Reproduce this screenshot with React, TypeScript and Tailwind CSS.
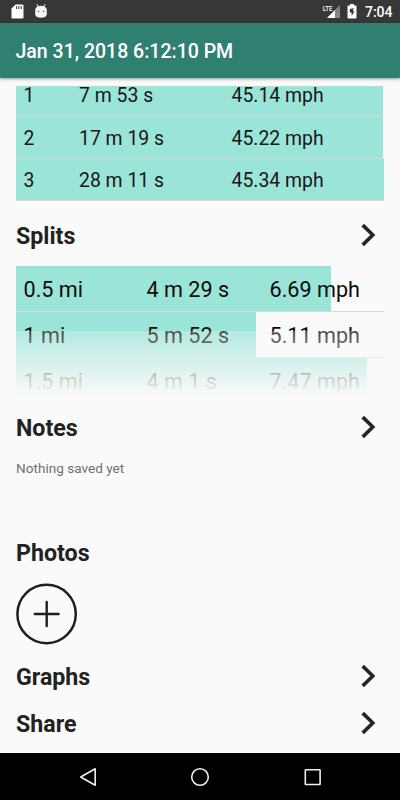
import React from "react";

const laps = [
  { lap: "1", time: "7 m 53 s", speed: "45.14 mph", width: 367 },
  { lap: "2", time: "17 m 19 s", speed: "45.22 mph", width: 367 },
  { lap: "3", time: "28 m 11 s", speed: "45.34 mph", width: 368 },
];

const splits = [
  { distance: "0.5 mi", time: "4 m 29 s", speed: "6.69 mph", width: 315 },
  { distance: "1 mi", time: "5 m 52 s", speed: "5.11 mph", width: 240 },
  { distance: "1.5 mi", time: "4 m 1 s", speed: "7.47 mph", width: 351 },
];

function StatusBar() {
  return (
    <div className="flex h-[23px] shrink-0 items-center bg-[#373737] text-white">
      <svg className="ml-[11px] h-[15px] w-[13px]" viewBox="0 0 13 15">
        <path
          d="M4.6 0.5H11.3Q12.5 0.5 12.5 1.7V13.3Q12.5 14.5 11.3 14.5H1.7Q0.5 14.5 0.5 13.3V4.6Z"
          fill="#fff"
        />
        <path d="M5.6 2v3M7.9 2v3M10.2 2v3" stroke="#555" strokeWidth="1.2" />
      </svg>
      <svg className="ml-[10px] h-[15px] w-[14px]" viewBox="0 0 14 15">
        <path d="M2.8 0.2l1.6 2.8M11.2 0.2L9.6 3" stroke="#ccc" strokeWidth="1.2" />
        <path
          d="M1.2 5.2Q2.6 1.8 7 1.8T12.8 5.2V10.6Q12 13.8 7 13.8T1.2 10.6Z"
          fill="#f4f4f4"
        />
        <circle cx="4.4" cy="7.4" r="0.7" fill="#444" />
        <circle cx="9.6" cy="7.4" r="0.7" fill="#444" />
      </svg>
      <div className="ml-auto flex items-center">
        <svg className="h-[15px] w-[19px]" viewBox="0 0 19 15">
          <path d="M18 1V14H5Z" fill="#858585" />
          <path d="M13 6V14H5Z" fill="#fff" />
          <text
            x="0.8"
            y="6.8"
            fill="#fff"
            fontSize="8"
            fontWeight="500"
            textLength="9.5"
            lengthAdjust="spacingAndGlyphs"
          >
            LTE
          </text>
        </svg>
        <svg className="ml-[6px] h-[15px] w-[10px]" viewBox="0 0 10 15">
          <path d="M3 0h4v1.5h1.6q.9 0 .9.9v11.2q0 .9-.9.9H1.4q-.9 0-.9-.9V2.4q0-.9.9-.9H3Z" fill="#fff" />
          <path d="M6.9 4.2L2.8 5.1V8.5H4.6V12L7.6 7.3H5.8Z" fill="#373737" />
        </svg>
        <span className="mr-[7.5px] ml-[7.5px] pt-px text-[14px] leading-none font-medium">7:04</span>
      </div>
    </div>
  );
}

function Chevron() {
  return (
    <svg className="mr-[8px] h-[24px] w-[16px]" viewBox="0 0 16 24" fill="none">
      <path d="M2.7 2.1L12.8 12L2.7 21.9" stroke="#262626" strokeWidth="3.6" />
    </svg>
  );
}

function SectionHeader({ title, arrow = true }: { title: string; arrow?: boolean }) {
  return (
    <div className="flex h-[46px] items-center justify-between">
      <h2 className="pt-[3px] text-[23.2px] leading-none font-bold text-[#222]">{title}</h2>
      {arrow && <Chevron />}
    </div>
  );
}

function LapTable() {
  return (
    <div className="flex h-[115.5px] flex-col justify-end overflow-hidden">
      {laps.map((row) => (
        <div
          key={row.lap}
          className="grid h-[42.5px] shrink-0 items-center border-b border-[#d4dcda] [grid-template-areas:'row']"
        >
          <div className="h-full bg-[#9be4d8] [grid-area:row]" style={{ width: row.width }} />
          <div className="flex pt-[3px] pl-[7.5px] text-[19.4px] leading-none text-[#171717] [grid-area:row]">
            <span className="w-[55.5px]">{row.lap}</span>
            <span className="w-[152.5px]">{row.time}</span>
            <span>{row.speed}</span>
          </div>
        </div>
      ))}
    </div>
  );
}

function SplitTable() {
  return (
    <div className="relative h-[130px] overflow-hidden">
      {splits.map((row) => (
        <div
          key={row.distance}
          className="grid h-[46px] items-center border-b border-[#d8d8d8] [grid-template-areas:'row']"
        >
          <div className="h-full bg-[#9be4d8] [grid-area:row]" style={{ width: row.width }} />
          <div className="flex pt-[2px] pl-[7.5px] text-[21.6px] leading-none text-[#0c0c0c] [grid-area:row]">
            <span className="w-[123px]">{row.distance}</span>
            <span className="w-[123px]">{row.time}</span>
            <span>{row.speed}</span>
          </div>
        </div>
      ))}
      {/* fades the last rows into the page */}
      <div className="absolute inset-x-0 bottom-0 h-[65px] bg-linear-to-b from-[#fafafa]/25 to-[#fafafa]" />
    </div>
  );
}

function NavBar() {
  return (
    <div className="flex h-[47px] shrink-0 items-center bg-black">
      <svg className="h-[47px] w-full" viewBox="0 0 400 47" fill="none" stroke="#eee" strokeWidth="1.6">
        <path d="M80.7 24L95.2 15.8V32.2Z" strokeLinejoin="round" />
        <circle cx="200" cy="24" r="8.3" />
        <rect x="305.3" y="16.7" width="14.8" height="14.8" rx="0.5" />
      </svg>
    </div>
  );
}

export default function App() {
  return (
    <div className="flex h-[800px] w-[400px] flex-col overflow-hidden bg-[#fafafa] font-['Roboto',sans-serif]">
      <StatusBar />
      <header className="z-10 flex h-[55px] shrink-0 items-center bg-[#308072] pt-[2px] pl-[15.5px] shadow-[0_1px_3px_rgba(0,0,0,0.4)]">
        <h1 className="text-[19.5px] leading-none font-medium text-white">Jan 31, 2018 6:12:10 PM</h1>
      </header>
      <main className="flex-1 px-[16px] pt-[7.5px]">
        <LapTable />
        <div className="mt-[11px]">
          <SectionHeader title="Splits" />
        </div>
        <div className="mt-[8px]">
          <SplitTable />
        </div>
        <div className="mt-[8.4px]">
          <SectionHeader title="Notes" />
        </div>
        <p className="mt-[10.6px] h-[14px] text-[13.6px] leading-[14px] text-[#707070]">Nothing saved yet</p>
        <div className="mt-[54.4px]">
          <SectionHeader title="Photos" arrow={false} />
        </div>
        <button className="mt-[7.6px] block">
          <svg className="h-[62px] w-[62px]" viewBox="0 0 62 62" fill="none" stroke="#1f1f1f">
            <circle cx="30.6" cy="31" r="29.2" strokeWidth="2.5" />
            <path d="M18.8 31H42.6M30.7 19V43" strokeWidth="2.4" strokeLinecap="round" />
          </svg>
        </button>
        <div className="mt-[8.4px] flex flex-col gap-px">
          <SectionHeader title="Graphs" />
          <SectionHeader title="Share" />
        </div>
      </main>
      <NavBar />
    </div>
  );
}
